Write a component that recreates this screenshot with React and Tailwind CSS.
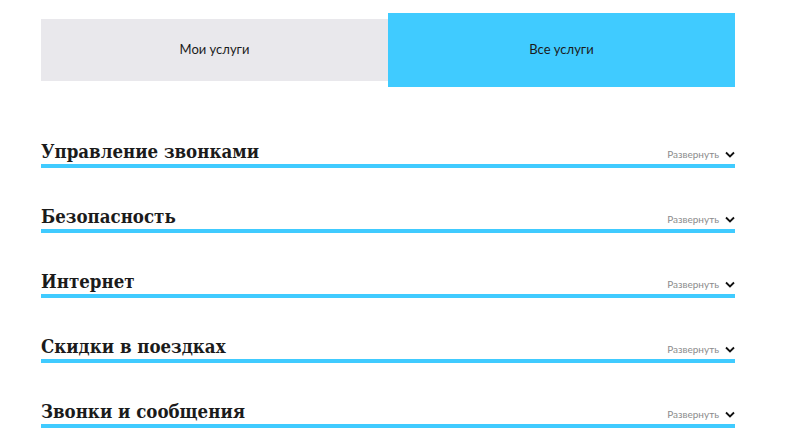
const sections = [
  "Управление звонками",
  "Безопасность",
  "Интернет",
  "Скидки в поездках",
  "Звонки и сообщения",
];

const Chevron = () => (
  <svg width="10" height="7" viewBox="0 0 10 7" className="ml-[6px]">
    <path d="M1 1.5 L5 5.5 L9 1.5" fill="none" stroke="#111" strokeWidth="1.8" />
  </svg>
);

export default function App() {
  return (
    <div className="w-[785px] h-[444px] overflow-hidden bg-white font-['Lato',sans-serif]">
      <div className="ml-[41px] w-[694px]">
        {/* TABS */}
        <div className="flex items-center mt-[13px]">
          <button className="w-[347px] h-[62px] bg-[#e9e8ec] text-[13px] text-[#1b1b1b]">
            Мои услуги
          </button>
          <button className="w-[347px] h-[74px] bg-[#40cbff] text-[13px] text-[#1b1b1b]">
            Все услуги
          </button>
        </div>

        {/* SECTIONS */}
        <div className="mt-[16px]">
          {sections.map((title) => (
            <div key={title} className="h-[65px] flex items-end">
              <div className="w-full flex items-end justify-between border-b-4 border-[#40cbff]">
                <h2 className="font-['DejaVu_Serif_Condensed','DejaVu_Serif',serif] font-bold text-[18.5px] leading-[24px] text-[#1b1b1b]">
                  {title}
                </h2>
                <span className="flex items-center mb-[2px] text-[10px] text-[#8c8c8c]">
                  Развернуть
                  <Chevron />
                </span>
              </div>
            </div>
          ))}
        </div>
      </div>
    </div>
  );
}
